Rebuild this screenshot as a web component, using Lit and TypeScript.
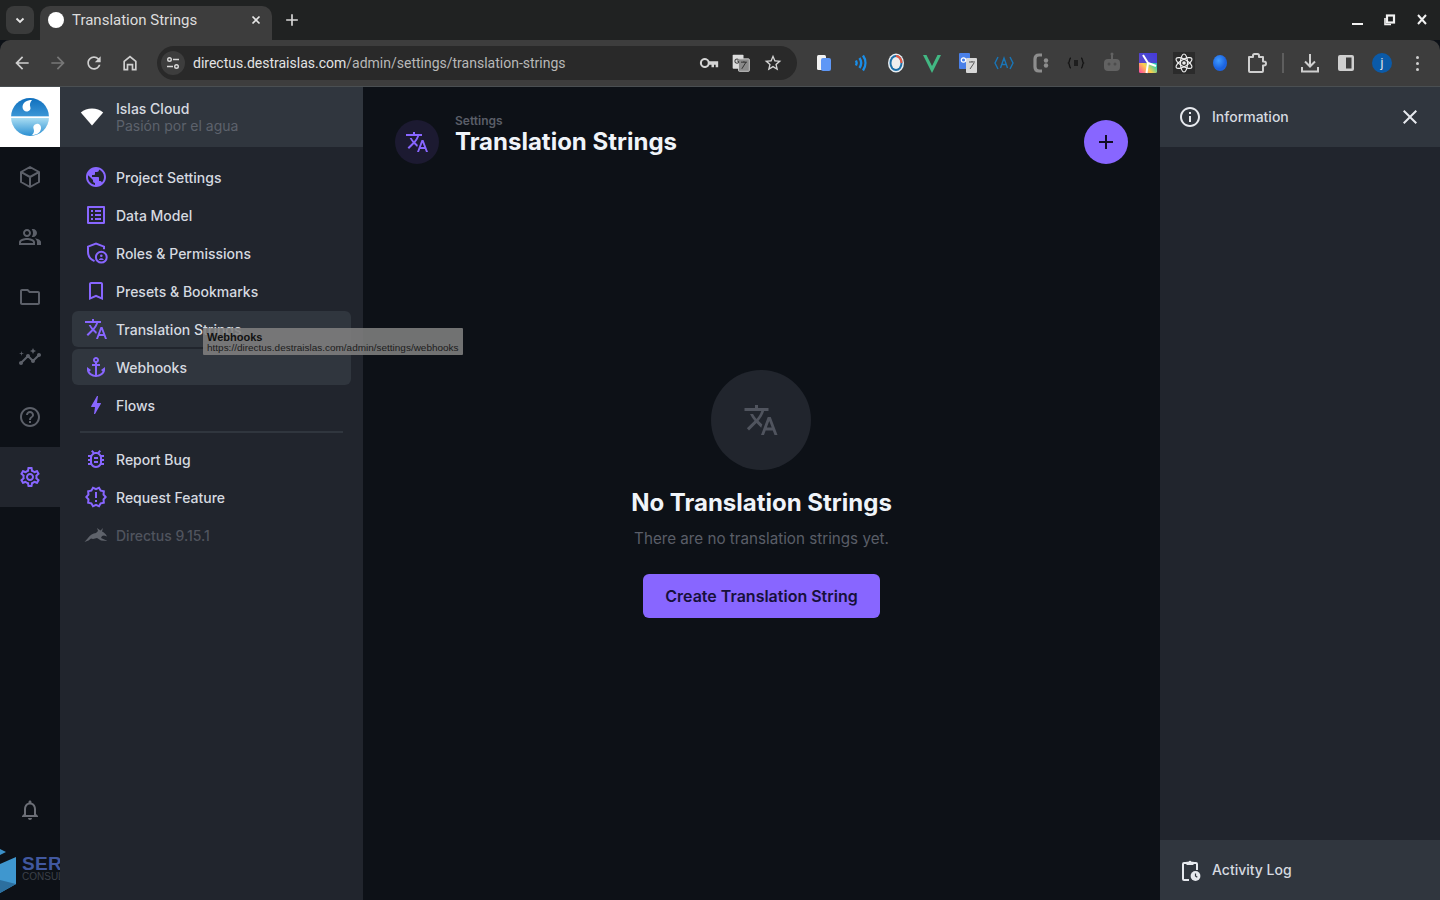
import { LitElement, html, css, svg } from "lit";
import { customElement } from "lit/decorators.js";

const P = {
  public: "M12 2C6.48 2 2 6.48 2 12s4.48 10 10 10 10-4.48 10-10S17.52 2 12 2zm-1 17.93c-3.95-.49-7-3.85-7-7.93 0-.62.08-1.21.21-1.79L9 15v1c0 1.1.9 2 2 2v1.93zm6.9-2.54c-.26-.81-1-1.39-1.9-1.39h-1v-3c0-.55-.45-1-1-1H8v-2h2c.55 0 1-.45 1-1V7h2c1.1 0 2-.9 2-2v-.41c2.93 1.19 5 4.06 5 7.41 0 2.08-.8 3.97-2.1 5.39z",
  list: "M19 5v14H5V5h14m1.1-2H3.9c-.5 0-.9.4-.9.9v16.2c0 .4.4.9.9.9h16.2c.4 0 .9-.5.9-.9V3.9c0-.5-.5-.9-.9-.9zM11 7h6v2h-6V7zm0 4h6v2h-6v-2zm0 4h6v2h-6zM7 7h2v2H7zm0 4h2v2H7zm0 4h2v2H7z",
  bookmark: "M17 3H7c-1.1 0-2 .9-2 2v16l7-3 7 3V5c0-1.1-.9-2-2-2zm0 15l-5-2.18L7 18V5h10v13z",
  translate: "M12.87 15.07l-2.54-2.51.03-.03c1.74-1.94 2.98-4.17 3.71-6.53H17V4h-7V2H8v2H1v1.99h11.17C11.5 7.92 10.44 9.75 9 11.35 8.07 10.32 7.3 9.19 6.69 8h-2c.73 1.63 1.73 3.17 2.98 4.56l-5.09 5.02L4 19l5-5 3.11 3.11.76-2.04zM18.5 10h-2L12 22h2l1.12-3h4.75L21 22h2l-4.5-12zm-2.62 7l1.62-4.33L19.12 17h-3.24z",
  anchor: "M17,15l1.55,1.55c-0.96,1.69-3.33,3.04-5.55,3.37V11h3V9h-3V7.82C14.16,7.4,15,6.3,15,5c0-1.65-1.35-3-3-3S9,3.35,9,5c0,1.3,0.84,2.4,2,2.82V9H8v2h3v8.92c-2.22-0.33-4.59-1.68-5.55-3.37L7,15l-4-3v3c0,3.88,4.92,7,9,7s9-3.12,9-7v-3L17,15z M12,4c0.55,0,1,0.45,1,1s-0.45,1-1,1s-1-0.45-1-1S11.45,4,12,4z",
  bolt: "M11 21h-1l1-7H7.5c-.58 0-.57-.32-.38-.66.19-.34.05-.08.07-.12C8.48 10.94 10.42 7.54 13 3h1l-1 7h3.5c.49 0 .56.33.47.51l-.07.15C12.96 17.55 11 21 11 21z",
  bug: "M20 8h-2.81c-.45-.78-1.07-1.45-1.82-1.96L17 4.41 15.59 3l-2.17 2.17C12.96 5.06 12.49 5 12 5c-.49 0-.96.06-1.41.17L8.41 3 7 4.41l1.62 1.63C7.88 6.55 7.26 7.22 6.81 8H4v2h2.09c-.05.33-.09.66-.09 1v1H4v2h2v1c0 .34.04.67.09 1H4v2h2.81c1.04 1.79 2.97 3 5.19 3s4.15-1.21 5.19-3H20v-2h-2.09c.05-.33.09-.66.09-1v-1h2v-2h-2v-1c0-.34-.04-.67-.09-1H20V8zm-4 4v3c0 .22-.03.47-.07.7l-.1.65-.37.65c-.72 1.24-2.04 2-3.46 2s-2.74-.77-3.46-2l-.37-.64-.1-.65C8.03 15.47 8 15.22 8 15v-4c0-.22.03-.47.07-.7l.1-.65.37-.65c.3-.52.72-.97 1.21-1.31l.57-.39.74-.18c.31-.08.63-.12.94-.12.32 0 .63.04.95.12l.68.16.61.42c.5.34.91.78 1.21 1.31l.38.65.1.65c.04.22.07.47.07.69v1zm-6 2h4v2h-4zm0-4h4v2h-4z",
  release: "M23 12l-2.44-2.78.34-3.68-3.61-.82-1.89-3.18L12 3 8.6 1.54 6.71 4.72l-3.61.81.34 3.68L1 12l2.44 2.78-.34 3.69 3.61.82 1.89 3.18L12 21l3.4 1.46 1.89-3.18 3.61-.82-.34-3.68L23 12zm-4.51 2.11l.26 2.79-2.74.62-1.43 2.41L12 18.82l-2.58 1.11-1.43-2.41-2.74-.62.26-2.8L3.66 12l1.85-2.12-.26-2.78 2.74-.61 1.43-2.41L12 5.18l2.58-1.11 1.43 2.41 2.74.62-.26 2.79L20.34 12l-1.85 2.11zM11 15h2v2h-2zm0-8h2v6h-2z",
  settings: "M19.43 12.98c.04-.32.07-.64.07-.98 0-.34-.03-.66-.07-.98l2.11-1.65c.19-.15.24-.42.12-.64l-2-3.46c-.09-.16-.26-.25-.44-.25-.06 0-.12.01-.17.03l-2.49 1c-.52-.4-1.08-.73-1.69-.98l-.38-2.65C14.46 2.18 14.25 2 14 2h-4c-.25 0-.46.18-.49.42l-.38 2.65c-.61.25-1.17.59-1.69.98l-2.49-1c-.06-.02-.12-.03-.18-.03-.17 0-.34.09-.43.25l-2 3.46c-.13.22-.07.49.12.64l2.11 1.65c-.04.32-.07.65-.07.98 0 .33.03.66.07.98l-2.11 1.65c-.19.15-.24.42-.12.64l2 3.46c.09.16.26.25.44.25.06 0 .12-.01.17-.03l2.49-1c.52.4 1.08.73 1.69.98l.38 2.65c.03.24.24.42.49.42h4c.25 0 .46-.18.49-.42l.38-2.65c.61-.25 1.17-.59 1.69-.98l2.49 1c.06.02.12.03.18.03.17 0 .34-.09.43-.25l2-3.46c.12-.22.07-.49-.12-.64l-2.11-1.65zm-1.98-1.71c.04.31.05.52.05.73 0 .21-.02.43-.05.73l-.14 1.13.89.7 1.08.84-.7 1.21-1.27-.51-1.04-.42-.9.68c-.43.32-.84.56-1.25.73l-1.06.43-.16 1.13-.2 1.35h-1.4l-.19-1.35-.16-1.13-1.06-.43c-.43-.18-.83-.41-1.23-.71l-.91-.7-1.06.43-1.27.51-.7-1.21 1.08-.84.89-.7-.14-1.13c-.03-.31-.05-.54-.05-.74s.02-.43.05-.73l.14-1.13-.89-.7-1.08-.84.7-1.21 1.27.51 1.04.42.9-.68c.43-.32.84-.56 1.25-.73l1.06-.43.16-1.13.2-1.35h1.39l.19 1.35.16 1.13 1.06.43c.43.18.83.41 1.23.71l.91.7 1.06-.43 1.27-.51.7 1.21-1.07.85-.89.7.14 1.13zM12 8c-2.21 0-4 1.79-4 4s1.79 4 4 4 4-1.79 4-4-1.79-4-4-4zm0 6c-1.1 0-2-.9-2-2s.9-2 2-2 2 .9 2 2-.9 2-2 2z",
  group: "M16.67 13.13C18.04 14.06 19 15.32 19 17v3h4v-3c0-2.18-3.57-3.47-6.33-3.87zM15 12c2.21 0 4-1.79 4-4s-1.79-4-4-4c-.47 0-.91.1-1.33.24C14.5 5.27 15 6.58 15 8s-.5 2.73-1.33 3.76c.42.14.86.24 1.33.24zM9 12c2.21 0 4-1.79 4-4s-1.79-4-4-4-4 1.79-4 4 1.79 4 4 4zm0-6c1.1 0 2 .9 2 2s-.9 2-2 2-2-.9-2-2 .9-2 2-2zM9 13c-2.67 0-8 1.34-8 4v3h16v-3c0-2.66-5.33-4-8-4zm6 5H3v-.99C3.2 16.29 6.3 15 9 15s5.8 1.29 6 2v1z",
  folder: "M9.17 6l2 2H20v10H4V6h5.17M10 4H4c-1.1 0-1.99.9-1.99 2L2 18c0 1.1.9 2 2 2h16c1.1 0 2-.9 2-2V8c0-1.1-.9-2-2-2h-8l-2-2z",
  insights: "M21 8c-1.45 0-2.26 1.44-1.93 2.51l-3.55 3.56c-.3-.09-.74-.09-1.04 0l-2.55-2.55C12.27 10.45 11.46 9 10 9c-1.45 0-2.27 1.44-1.93 2.52l-4.56 4.55C2.44 15.74 1 16.55 1 18c0 1.1.9 2 2 2 1.45 0 2.26-1.44 1.93-2.51l4.55-4.56c.3.09.74.09 1.04 0l2.55 2.55C12.73 16.55 13.54 18 15 18c1.45 0 2.27-1.44 1.93-2.52l3.56-3.55c1.07.33 2.51-.48 2.51-1.93 0-1.1-.9-2-2-2zM15 9l.94-2.07L18 6l-2.06-.93L15 3l-.92 2.07L12 6l2.08.93zM3.5 11L4 9l2-.5L4 8l-.5-2L3 8l-2 .5L3 9z",
  help: "M11 18h2v-2h-2v2zm1-16C6.48 2 2 6.48 2 12s4.48 10 10 10 10-4.48 10-10S17.52 2 12 2zm0 18c-4.41 0-8-3.59-8-8s3.59-8 8-8 8 3.59 8 8-3.59 8-8 8zm0-14c-2.21 0-4 1.79-4 4h2c0-1.1.9-2 2-2s2 .9 2 2c0 2-3 1.75-3 5h2c0-2.25 3-2.5 3-5 0-2.21-1.79-4-4-4z",
  bell: "M12 22c1.1 0 2-.9 2-2h-4c0 1.1.9 2 2 2zm6-6v-5c0-3.07-1.63-5.64-4.5-6.32V4c0-.83-.67-1.5-1.5-1.5s-1.5.67-1.5 1.5v.68C7.64 5.36 6 7.92 6 11v5l-2 2v1h16v-1l-2-2zm-2 1H8v-6c0-2.48 1.51-4.5 4-4.5s4 2.02 4 4.5v6z",
  info: "M11 7h2v2h-2zm0 4h2v6h-2zm1-9C6.48 2 2 6.48 2 12s4.48 10 10 10 10-4.48 10-10S17.52 2 12 2zm0 18c-4.41 0-8-3.59-8-8s3.59-8 8-8 8 3.59 8 8-3.59 8-8 8z",
  close: "M19 6.41L17.59 5 12 10.59 6.41 5 5 6.41 10.59 12 5 17.59 6.41 19 12 13.41 17.59 19 19 17.59 13.41 12z",
  add: "M19 13h-6v6h-2v-6H5v-2h6V5h2v6h6v2z",
  wifi: "M12 20.5 .8 7.6C3.8 5 7.7 3.6 12 3.6s8.2 1.4 11.2 4z",
  rabbit: "M.5 19 4 15c2-3 5-4.500 8-5l2-2-1-3 3.500 2.500L19 5l-1 3.500c2 1 4 2.500 5 5l-3-1-2 .5-1 2 6.500 3-6.500-.5-4-2.500-4 1-2-.5L4.500 17.500z",
  back: "M20 11H7.83l5.59-5.59L12 4l-8 8 8 8 1.41-1.41L7.83 13H20v-2z",
  fwd: "M12 4l-1.41 1.41L16.17 11H4v2h12.17l-5.58 5.59L12 20l8-8z",
  reload: "M17.65 6.35C16.2 4.9 14.21 4 12 4c-4.42 0-7.99 3.58-7.99 8s3.57 8 7.99 8c3.73 0 6.84-2.55 7.73-6h-2.08c-.82 2.33-3.04 4-5.65 4-3.31 0-6-2.69-6-6s2.69-6 6-6c1.66 0 3.14.69 4.22 1.78L13 11h7V4l-2.35 2.35z",
  home: "M12 3 4 9.5V21h6v-6h4v6h6V9.5zm6 16h-2v-6H8v6H6v-8.5l6-4.9 6 4.9z",
  key: "M12.65 10A6 6 0 1 0 12.65 14H15v3h3v-3h2v3h3v-7zM7 15.500a3.500 3.500 0 1 1 0-7 3.500 3.500 0 0 1 0 7z",
  star: "M22 9.24l-7.19-.62L12 2 9.19 8.63 2 9.24l5.46 4.73L5.82 21 12 17.27 18.18 21l-1.63-7.03L22 9.24zM12 15.4l-3.76 2.27 1-4.28-3.32-2.88 4.38-.38L12 6.1l1.71 4.04 4.38.38-3.32 2.88 1 4.28L12 15.4z",
};

const icon = (d: string, size = 24) =>
  html`<svg class="ic" width=${size} height=${size} viewBox="0 0 24 24" fill="currentColor"><path d=${d}></path></svg>`;

const cube = html`<svg class="ic" width="24" height="24" viewBox="0 0 24 24" fill="none" stroke="currentColor" stroke-width="2" stroke-linejoin="round"><path d="M12 2 21 7v10l-9 5-9-5V7zM3.3 7.2 12 12l8.7-4.8M12 12v10"></path></svg>`;

const shield = html`<svg class="ic" width="24" height="24" viewBox="0 0 24 24" fill="none" stroke="currentColor" stroke-width="2"><path d="M10.500 20.200C6.500 18.400 4 14.800 4 10.800V5.600L12 2.600l8 3v2.600"></path><circle cx="17.300" cy="16.200" r="5.400"></circle><circle cx="17.300" cy="14.800" r="1.300" fill="currentColor" stroke="none"></circle><path d="M14.800 19c.3-1.200 1.300-1.800 2.500-1.800s2.200.6 2.500 1.800z" fill="currentColor" stroke="none"></path></svg>`;

const clipClock = html`<svg class="ic" width="24" height="24" viewBox="0 0 24 24" fill="none" stroke="currentColor" stroke-width="2"><path d="M11 22H6a1 1 0 0 1-1-1V6a1 1 0 0 1 1-1h3M15 5h3a1 1 0 0 1 1 1v6"></path><path d="M8.500 3.800h2a1.600 1.600 0 0 1 3 0h2V7h-7z" fill="currentColor" stroke="none"></path><circle cx="17.500" cy="18" r="4.900" fill="currentColor" stroke="none"></circle><path d="M17.500 15.500V18l1.800 1.300" stroke="#30363e" stroke-width="1.200"></path></svg>`;

const navTop = [
  [P.public, "Project Settings"],
  [P.list, "Data Model"],
  [null, "Roles & Permissions"],
  [P.bookmark, "Presets & Bookmarks"],
  [P.translate, "Translation Strings", "hl"],
  [P.anchor, "Webhooks", "hl"],
  [P.bolt, "Flows"],
];

const ext = [
  svg`<rect x="5" y="4" width="9" height="15" rx="1.500" fill="#f2f2f2"/><rect x="9" y="7" width="10" height="13" rx="2" fill="#5e97f6"/>`,
  svg`<g fill="none" stroke="#1a8ee8" stroke-width="2.400"><path d="M8 9.500a5 5 0 0 1 0 5"/><path d="M11.500 7a9 9 0 0 1 0 10"/><path d="M15 4.500a13 13 0 0 1 0 15"/></g>`,
  svg`<ellipse cx="12" cy="12" rx="8" ry="9.500" fill="#e8eef2"/><ellipse cx="12" cy="12" rx="6.500" ry="8" fill="#1d6fa8"/><ellipse cx="12" cy="12" rx="4.500" ry="6" fill="#eee"/><path d="M12 4a6.500 8 0 0 1 6.500 8h-2A4.500 6 0 0 0 12 6z" fill="#e8563f"/>`,
  svg`<path d="M3 4h3.500L12 15 17.500 4H21L12 22z" fill="#42b883"/>`,
  svg`<rect x="3" y="2" width="11" height="16" rx="1" fill="#4a80e8"/><rect x="10" y="7" width="11" height="15" rx="1" fill="#d8d8d8"/><path d="M13 11h6M16 10v1M14 18l4-6" stroke="#555" fill="none"/><circle cx="7.500" cy="9" r="2.200" fill="none" stroke="#fff" stroke-width="1.200"/>`,
  svg`<g fill="none" stroke="#1976b8" stroke-width="1.400"><path d="M6 6l-3 6 3 6M18 6l3 6-3 6M8.500 17 12 7l3.500 10M10 13.500h4"/></g>`,
  svg`<g fill="none" stroke="#8d8d8d" stroke-width="3.200"><path d="M14 4h-3C8 4 7 6 7 8v8c0 2 1 4 4 4h3"/></g><g fill="#8d8d8d"><circle cx="18" cy="9.500" r="2.200"/><circle cx="18" cy="14.500" r="2.200"/></g>`,
  svg`<g fill="none" stroke="#151515" stroke-width="1.400"><path d="M7 7c-2 0-1 4-2.500 5C6 13 5 17 7 17M17 7c2 0 1 4 2.500 5-1.500 1-.5 5-2.500 5M10 10h4M10 12h4M10 14h4"/></g>`,
  svg`<g fill="#626262"><rect x="4" y="8" width="16" height="12" rx="4"/><rect x="11" y="3" width="2" height="5"/><circle cx="12" cy="3" r="1.500"/></g><circle cx="9" cy="13" r="1.500" fill="#4c4c4c"/><circle cx="15" cy="13" r="1.500" fill="#4c4c4c"/>`,
  svg`<defs><linearGradient id="pg" x1="0" y1="1" x2="1" y2="0"><stop offset="0" stop-color="#ff3fa4"/><stop offset=".35" stop-color="#ffd14a"/><stop offset=".65" stop-color="#2fd0b5"/><stop offset="1" stop-color="#3b3bd9"/></linearGradient></defs><rect x="3" y="2" width="18" height="20" rx="1.500" fill="url(#pg)"/><path d="M3 2h18v10H3z" fill="#4a36d8" opacity=".9"/><path d="M12 12 7 4M12 12l8 3M12 12l-1.500 10" stroke="#fff" stroke-width="2" fill="none"/>`,
  svg`<rect x="1" y="1" width="22" height="22" fill="#2b2b2b"/><g fill="none" stroke="#eee" stroke-width="1.200"><ellipse cx="12" cy="12" rx="9" ry="3.500" transform="rotate(90 12 12)"/><ellipse cx="12" cy="12" rx="9" ry="3.500" transform="rotate(30 12 12)"/><ellipse cx="12" cy="12" rx="9" ry="3.500" transform="rotate(150 12 12)"/></g><circle cx="12" cy="12" r="1.800" fill="#eee"/>`,
  svg`<defs><radialGradient id="bg2" cx=".4" cy=".35"><stop offset="0" stop-color="#3f9bff"/><stop offset="1" stop-color="#1c63e0"/></radialGradient></defs><ellipse cx="12" cy="12" rx="7" ry="8" fill="url(#bg2)"/>`,
];

@customElement("app-root")
export class AppRoot extends LitElement {
  static styles = css`
    :host { display: block; width: 1440px; height: 900px; overflow: hidden; font-family: Inter, "Liberation Sans", sans-serif; background: #0d1117; }
    * { box-sizing: border-box; }
    .ic { display: block; flex: none; }
    .page { display: flex; flex-direction: column; height: 900px; position: relative; }

    /* Browser chrome */
    .strip { height: 40px; background: #202222; display: flex; align-items: flex-end; padding-left: 6px; color: #e3e3e3; font-family: Roboto, sans-serif; flex: none; }
    .tabs-btn { width: 28px; height: 28px; margin-bottom: 6px; border-radius: 8px; background: #3a3b3b; display: flex; align-items: center; justify-content: center; }
    .tab { width: 232px; height: 34px; margin-left: 6px; background: #3d3d3d; border-radius: 10px 10px 0 0; display: flex; align-items: center; padding: 0 8px 6px; font-size: 15px; }
    .favicon { width: 16px; height: 16px; border-radius: 50%; background: #fff; margin-right: 8px; flex: none; }
    .tab span { flex: 1; color: #dcdcdc; }
    .newtab { margin: 0 0 10px 10px; color: #d8d8d8; }
    .spacer { flex: 1; }
    .win { display: flex; align-self: stretch; align-items: center; gap: 8px; padding-right: 6px; color: #f2f2f2; }
    .toolbar { height: 47px; background: #3d3d3d; border-radius: 10px 10px 0 0; display: flex; align-items: center; color: #cfcfcf; flex: none; border-bottom: 1px solid #4a4f52; }
    .tb-nav { display: flex; padding-left: 12px; gap: 16px; width: 157px; }
    .tb-nav .dim { color: #777; }
    .omni { width: 640px; height: 34px; border-radius: 17px; background: #292929; display: flex; align-items: center; padding: 0 14px 0 4px; font: 14px Roboto, sans-serif; }
    .site { width: 24px; height: 24px; border-radius: 50%; background: #3d3d3d; display: flex; align-items: center; justify-content: center; margin-right: 8px; }
    .url { flex: 1; color: #b8b8b8; }
    .url b { font-weight: 400; color: #e3e3e3; }
    .omni-icons { display: flex; gap: 12px; color: #d4d4d4; }
    .exts { display: flex; gap: 12px; margin-left: 15px; align-items: center; }
    .sep { width: 2px; height: 20px; background: #5e5e5e; margin: 0 2px 0 2px; }
    .avatar { width: 20px; height: 20px; border-radius: 50%; background: #0b5aa8; color: #e8e8e8; font: 12px Roboto, sans-serif; text-align: center; line-height: 20px; margin: 0 2px; }
    .dots { width: 4px; display: flex; flex-direction: column; gap: 3px; margin-left: 10px; }
    .dots i { width: 3px; height: 3px; border-radius: 50%; background: #cfcfcf; }

    /* App */
    .app { flex: 1; min-height: 0; display: flex; }
    .modules { width: 60px; flex: none; background: #0d1117; color: #5c6069; display: flex; flex-direction: column; position: relative; overflow: hidden; }
    .logo { height: 60px; background: #fff; display: flex; align-items: center; justify-content: center; flex: none; }
    .mod { height: 60px; display: flex; align-items: center; justify-content: center; flex: none; }
    .mod.active { background: #21252d; color: #8866ff; }
    .bell { margin-top: auto; margin-bottom: 60px; color: #6b6e76; height: 60px; }
    .ser { position: absolute; left: 0; top: 761px; width: 60px; height: 52px; overflow: hidden; }
    .ser-t { position: absolute; left: 22px; top: 8px; font: 700 19px/16px "Liberation Sans", sans-serif; color: #41589f; letter-spacing: .3px; }
    .ser-c { position: absolute; left: 22px; top: 24px; font: 400 10px/10px "Liberation Sans", sans-serif; color: #3c4049; }
    .ser svg { position: absolute; left: 0; top: 0; }

    .nav { width: 303px; flex: none; background: #21252d; display: flex; flex-direction: column; }
    .proj { height: 60px; background: #30363e; display: flex; align-items: center; padding-left: 20px; gap: 12px; color: #fff; flex: none; }
    .proj .txt { font-size: 14px; line-height: 17px; font-weight: 500; color: #d6dae0; }
    .proj small { display: block; font-size: 14px; font-weight: 400; color: #5d626c; }
    .items { padding: 12px; display: flex; flex-direction: column; gap: 2px; }
    .item { height: 36px; border-radius: 6px; display: flex; align-items: center; padding-left: 12px; gap: 8px; font-size: 14px; font-weight: 500; color: #d6dae0; }
    .item .ic { color: #8866ff; }
    .item.hl { background: #30363e; }
    .item.muted { color: #50545e; }
    .item.muted .ic { color: #5f636b; }
    .rule { height: 2px; background: #30363e; margin: 6px 8px; }

    .main { flex: 1; min-width: 0; background: #0d1117; display: grid; grid-template: 1fr / 1fr; }
    .main > * { grid-area: 1 / 1; }
    .head { align-self: start; display: flex; align-items: center; padding: 33px 32px 0; }
    .head-ic { width: 44px; height: 44px; border-radius: 50%; background: #1c1a31; color: #8866ff; display: flex; align-items: center; justify-content: center; margin-right: 16px; flex: none; }
    .crumb { font-size: 12px; line-height: 14px; font-weight: 600; color: #5a5e68; margin-top: -14px; }
    .title { font-size: 24px; line-height: 28px; font-weight: 700; color: #f0f4f9; }
    .add { width: 44px; height: 44px; border-radius: 50%; background: #8866ff; color: #120d26; display: flex; align-items: center; justify-content: center; margin-left: auto; }
    .empty { align-self: center; justify-self: center; display: flex; flex-direction: column; align-items: center; }
    .e-ic { width: 100px; height: 100px; border-radius: 50%; background: #21252d; color: #50545e; display: flex; align-items: center; justify-content: center; margin-right: 1px; }
    .e-t { font-size: 24px; line-height: 30px; font-weight: 700; color: #f0f4f9; margin-top: 18px; }
    .e-s { font-size: 15.200px; line-height: 20px; color: #5a5e68; margin-top: 11px; }
    .btn { height: 44px; margin-top: 25px; padding: 0 22px; border-radius: 6px; background: #8866ff; color: #17103a; font-size: 16px; font-weight: 600; display: flex; align-items: center; }

    .side { width: 280px; flex: none; background: #21252d; display: flex; flex-direction: column; justify-content: space-between; }
    .side-row { height: 60px; background: #30363e; display: flex; align-items: center; padding-left: 18px; gap: 10px; font-size: 14px; font-weight: 500; color: #d6dae0; }
    .side-row .ic { color: #e6e9ee; }
    .side-row .lbl { padding-bottom: 2px; }
    .side-row .x { margin-left: auto; margin-right: 18px; color: #c6cad0; }

    .tip { position: absolute; left: 203px; top: 328px; width: 260px; height: 27px; background: rgba(128, 128, 128, .88); font-family: "Liberation Sans", sans-serif; color: #111; padding: 3px 4px; border-radius: 1px; }
    .tip b { display: block; font-size: 11px; line-height: 12px; }
    .tip span { display: block; font-size: 9.980px; line-height: 10px; color: #1c1c1c; white-space: nowrap; }
  `;

  render() {
    return html`
      <div class="page">
        <div class="strip">
          <div class="tabs-btn"><svg class="ic" width="12" height="12" viewBox="0 0 12 12" fill="none" stroke="#e6e6e6" stroke-width="1.800"><path d="M2.500 4.500 6 8l3.500-3.500"></path></svg></div>
          <div class="tab"><div class="favicon"></div><span>Translation Strings</span><svg class="ic" width="16" height="16" viewBox="0 0 16 16" stroke="#e6e6e6" stroke-width="1.700"><path d="M4.500 4.500l7 7M11.500 4.500l-7 7"></path></svg></div>
          <div class="newtab">${icon(P.add, 20)}</div>
          <div class="spacer"></div>
          <div class="win">
            <svg class="ic" width="24" height="24" viewBox="0 0 24 24" fill="#f2f2f2"><rect x="6" y="15" width="11" height="2"></rect></svg>
            <svg class="ic" width="24" height="24" viewBox="0 0 24 24" fill="none" stroke="#f2f2f2" stroke-width="1.600"><g transform="translate(-2 0)"><rect x="11" y="7.500" width="7" height="7" stroke-width="2.200"></rect><path d="M9 10v6.500h6"></path></g></svg>
            <svg class="ic" width="24" height="24" viewBox="0 0 24 24" fill="none" stroke="#f2f2f2" stroke-width="2"><path d="M8 7l8 9M16 7l-8 9"></path></svg>
          </div>
        </div>
        <div class="toolbar">
          <div class="tb-nav">
            ${icon(P.back, 20)}
            <span class="dim">${icon(P.fwd, 20)}</span>
            ${icon(P.reload, 20)}
            ${icon(P.home, 20)}
          </div>
          <div class="omni">
            <div class="site"><svg class="ic" width="16" height="16" viewBox="0 0 16 16" fill="none" stroke="#d8d8d8" stroke-width="1.400"><circle cx="4.500" cy="4.500" r="1.800"></circle><path d="M8 4.500h6M2 11.500h6"></path><circle cx="11.500" cy="11.500" r="1.800"></circle></svg></div>
            <div class="url"><b>directus.destraislas.com</b>/admin/settings/translation-strings</div>
            <div class="omni-icons">
              ${icon(P.key, 20)}
              <svg class="ic" width="20" height="20" viewBox="0 0 24 24"><rect x="2" y="2" width="13" height="17" rx="1" fill="#dcdcdc"></rect><rect x="9" y="7" width="13" height="15" rx="1" fill="#8a8a8a" stroke="#dcdcdc"></rect><path d="M12 11h7M15.500 10v1M13 19l5-8" stroke="#222" fill="none"></path><path d="M9 8a2.500 2.500 0 1 0 0 3.500V9.500H7" stroke="#444" stroke-width="1.300" fill="none"></path></svg>
              ${icon(P.star, 20)}
            </div>
          </div>
          <div class="exts">
            ${ext.map((e) => html`<svg class="ic" width="24" height="24" viewBox="0 0 24 24">${e}</svg>`)}
            <svg class="ic" width="24" height="24" viewBox="0 0 24 24" fill="none" stroke="#cfcfcf" stroke-width="2" stroke-linejoin="round"><path d="M5 6h4V4.500a1.500 1.500 0 0 1 1.500-1.500h3A1.500 1.500 0 0 1 15 4.500V6h4v4.500h1a2 2 0 0 1 0 4h-1V20a1 1 0 0 1-1 1H6a1 1 0 0 1-1-1z"></path></svg>
            <div class="sep"></div>
            <svg class="ic" width="24" height="24" viewBox="0 0 24 24" fill="none" stroke="#cfcfcf" stroke-width="2"><path d="M12 3v12M7 10.500l5 5 5-5M4 16v4.500h16V16"></path></svg>
            <svg class="ic" width="24" height="24" viewBox="0 0 24 24"><rect x="4" y="4" width="16" height="16" rx="2" fill="#cfcfcf"></rect><rect x="12" y="6.500" width="5.500" height="11" fill="#3d3d3d"></rect></svg>
            <div class="avatar">j</div>
            <div class="dots"><i></i><i></i><i></i></div>
          </div>
        </div>

        <div class="app">
          <div class="modules">
            <div class="logo">
              <svg width="40" height="40" viewBox="0 0 40 40">
                <defs>
                  <linearGradient id="lg1" x1="0" y1="0" x2="0" y2="1"><stop offset="0" stop-color="#0f6fbd"></stop><stop offset=".48" stop-color="#3b96d6"></stop><stop offset=".49" stop-color="#fff"></stop><stop offset=".52" stop-color="#fff"></stop><stop offset=".53" stop-color="#a8dcf2"></stop><stop offset="1" stop-color="#2a8fd2"></stop></linearGradient>
                </defs>
                <circle cx="20" cy="20" r="19" fill="url(#lg1)"></circle>
                <g transform="translate(-3 0)"><path d="M25 3c-5 0-9.500 2.500-9.500 7 0 3 2.500 5 5 4.500 2.500-.5 3.500-2.500 2.800-4.500C22.500 8 23 5 25 3z" fill="#fff"></path></g>
                <g transform="translate(6 1)"><path d="M16 37c4.500 0 8.500-2 9-6.500.3-3-2-5-4.500-4.600-2.500.4-3.800 2.500-3 4.600 1 2.500.5 4.500-1.500 6.500z" fill="#fff"></path></g>
              </svg>
            </div>
            <div class="mod">${cube}</div>
            <div class="mod">${icon(P.group)}</div>
            <div class="mod">${icon(P.folder)}</div>
            <div class="mod">${icon(P.insights)}</div>
            <div class="mod">${icon(P.help)}</div>
            <div class="mod active">${icon(P.settings)}</div>
            <div class="mod bell">${icon(P.bell)}</div>
            <div class="ser">
              <svg width="18" height="52" viewBox="0 0 18 52"><path d="M0 1l6 3-6 3z" fill="#3b8fc7"></path><path d="M0 16 16 9v27L0 45z" fill="#3f97cf"></path><path d="M0 32l16 4L0 45z" fill="#2c6f9f"></path></svg>
              <div class="ser-t">SER</div>
              <div class="ser-c">CONSUL</div>
            </div>
          </div>

          <div class="nav">
            <div class="proj">
              ${icon(P.wifi, 24)}
              <div class="txt">Islas Cloud<small>Pasión por el agua</small></div>
            </div>
            <div class="items">
              ${navTop.map(
                ([d, label, c]) => html`<div class="item ${c ?? ""}">${d ? icon(d) : shield}<span>${label}</span></div>`
              )}
              <div class="rule"></div>
              <div class="item">${icon(P.bug)}<span>Report Bug</span></div>
              <div class="item">${icon(P.release)}<span>Request Feature</span></div>
              <div class="item muted">${icon(P.rabbit)}<span>Directus 9.15.1</span></div>
            </div>
          </div>

          <div class="main">
            <div class="head">
              <div class="head-ic">${icon(P.translate)}</div>
              <div>
                <div class="crumb">Settings</div>
                <div class="title">Translation Strings</div>
              </div>
              <div class="add">${icon(P.add)}</div>
            </div>
            <div class="empty">
              <div class="e-ic">${icon(P.translate, 36)}</div>
              <div class="e-t">No Translation Strings</div>
              <div class="e-s">There are no translation strings yet.</div>
              <div class="btn">Create Translation String</div>
            </div>
          </div>

          <div class="side">
            <div class="side-row">${icon(P.info)}<span class="lbl">Information</span><span class="x">${icon(P.close)}</span></div>
            <div class="side-row">${clipClock}<span class="lbl">Activity Log</span></div>
          </div>
        </div>

        <div class="tip">
          <b>Webhooks</b>
          <span>https://directus.destraislas.com/admin/settings/webhooks</span>
        </div>
      </div>
    `;
  }
}
